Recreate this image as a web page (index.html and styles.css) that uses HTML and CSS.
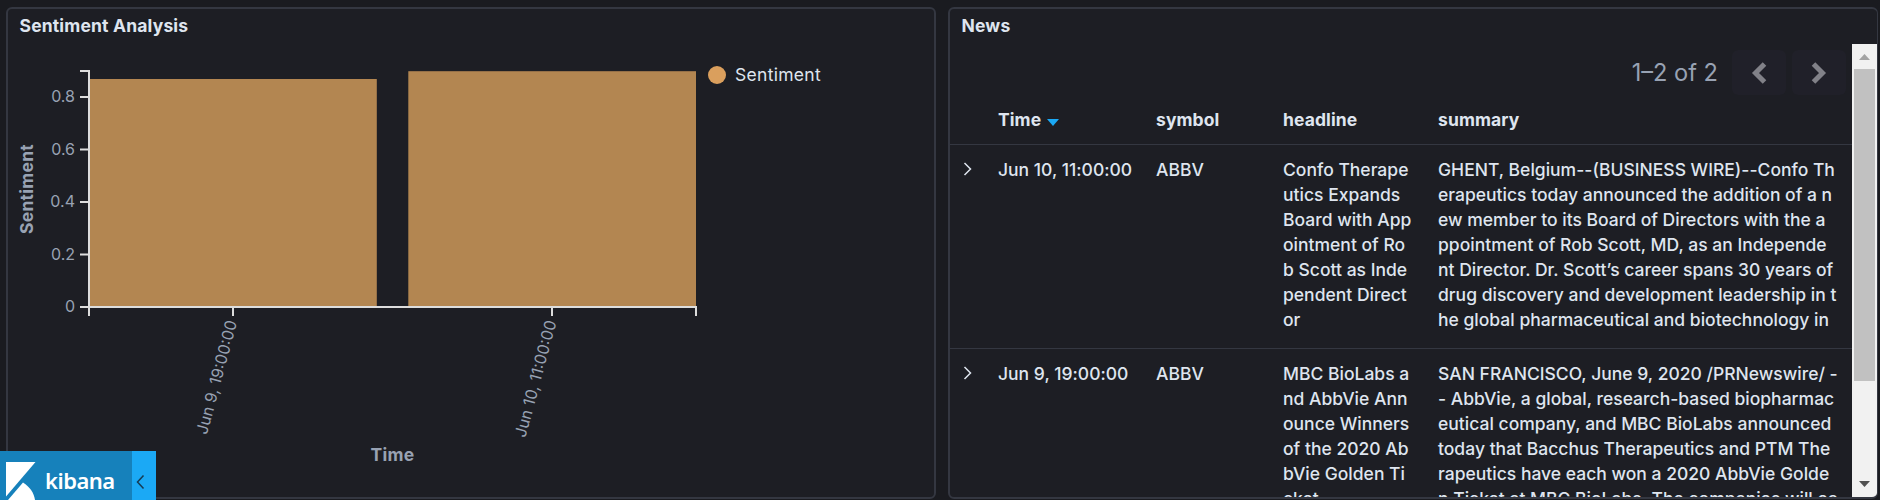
FILE: index.html
```html
<!DOCTYPE html>
<html lang="en">
<head>
<meta charset="utf-8">
<title>Dashboard</title>
<link rel="stylesheet" href="styles.css">
</head>
<body>
<main class="dashboard">
  <section class="panel">
    <h2 class="panel-title">Sentiment Analysis</h2>
    <svg class="chart" width="926" height="453" viewBox="8 44 926 453">
      <rect class="bar" x="89.5" y="79" width="287.3" height="228"/>
      <rect class="bar" x="408.3" y="71.200" width="287.7" height="236"/>
      <g class="axis">
        <path d="M80 71H89V307"/>
        <path d="M80 97H89M80 149.5H89M80 202H89M80 254.5H89"/>
        <path d="M80 307H696V316M89 307V316M233 307V316M552 307V316"/>
      </g>
      <g class="ticks">
        <text x="75" y="102">0.8</text>
        <text x="75" y="155">0.6</text>
        <text x="75" y="207">0.4</text>
        <text x="75" y="260">0.2</text>
        <text x="75" y="312">0</text>
        <text class="date" transform="translate(237.2 322) rotate(-75)">Jun 9, 19:00:00</text>
        <text class="date" transform="translate(556.5 322) rotate(-75)">Jun 10, 11:00:00</text>
      </g>
      <text class="axis-title" transform="translate(33 189) rotate(-90)">Sentiment</text>
      <text class="axis-title" x="392.5" y="461">Time</text>
      <circle class="dot" cx="717" cy="75" r="9"/>
      <text class="legend" x="735" y="81">Sentiment</text>
    </svg>
  </section>

  <section class="panel panel-news">
    <h2 class="panel-title">News</h2>
    <div class="scroll">
      <div class="content">
        <div class="pager">
          <span class="pager-text">1–2 of 2</span>
          <span class="pager-btn"><svg width="18" height="24" viewBox="0 0 18 24"><path d="M14.5 3 5.5 12l9 9"/></svg></span>
          <span class="pager-btn"><svg width="18" height="24" viewBox="0 0 18 24"><path d="M3.5 3l9 9-9 9"/></svg></span>
        </div>
        <div class="row head">
          <span></span>
          <span>Time<svg class="sort" width="12" height="7" viewBox="0 0 12 7"><path d="M0 0h12L6 7z"/></svg></span>
          <span>symbol</span><span>headline</span><span>summary</span>
        </div>
        <div class="row">
          <svg class="expand" width="10" height="16" viewBox="0 0 10 16"><path d="M1.5 2 7.5 8l-6 6"/></svg>
          <span>Jun 10, 11:00:00</span>
          <span>ABBV</span>
          <span>Confo Therape<br>utics Expands<br>Board with App<br>ointment of Ro<br>b Scott as Inde<br>pendent Direct<br>or</span>
          <span>GHENT, Belgium--(BUSINESS WIRE)--Confo Th<br>erapeutics today announced the addition of a n<br>ew member to its Board of Directors with the a<br>ppointment of Rob Scott, MD, as an Independe<br>nt Director. Dr. Scott’s career spans 30 years of<br>drug discovery and development leadership in t<br>he global pharmaceutical and biotechnology in</span>
        </div>
        <div class="row">
          <svg class="expand" width="10" height="16" viewBox="0 0 10 16"><path d="M1.5 2 7.5 8l-6 6"/></svg>
          <span>Jun 9, 19:00:00</span>
          <span>ABBV</span>
          <span>MBC BioLabs a<br>nd AbbVie Ann<br>ounce Winners<br>of the 2020 Ab<br>bVie Golden Ti<br>cket</span>
          <span>SAN FRANCISCO, June 9, 2020 /PRNewswire/ -<br>- AbbVie, a global, research-based biopharmac<br>eutical company, and MBC BioLabs announced<br>today that Bacchus Therapeutics and PTM The<br>rapeutics have each won a 2020 AbbVie Golde<br>n Ticket at MBC BioLabs. The companies will ea</span>
        </div>
      </div>
      <div class="scrollbar">
        <svg class="up" width="11" height="6" viewBox="0 0 11 6"><path d="M0 6 5.5 0 11 6z"/></svg>
        <div class="thumb"></div>
        <svg class="down" width="11" height="6" viewBox="0 0 11 6"><path d="M0 0h11L5.500 6z"/></svg>
      </div>
    </div>
  </section>
</main>

<div class="brand">
  <div class="brand-main">
    <svg class="brand-logo" width="30" height="38" viewBox="0 0 30 38"><path d="M0 0H29.500L0 34.500z"/><path d="M17 20.500C24 25 28 31 29 38H2z"/></svg>
    <span class="brand-name">kibana</span>
  </div>
  <div class="brand-toggle"><svg width="9" height="16" viewBox="0 0 9 16"><path d="M7.500 1.500 1.500 8l6 6.500"/></svg></div>
</div>
</body>
</html>
```
FILE: styles.css
```css
* { box-sizing: border-box; }
body {
  margin: 0;
  width: 1880px;
  height: 500px;
  overflow: hidden;
  background: #1a1b20;
  color: #dfe5ef;
  font: 17.5px/25px Inter, sans-serif;
}
svg { display: block; }
.dashboard {
  display: flex;
  gap: 12px;
  height: 499px;
  padding: 7px 2px 0 6px;
}
.panel {
  display: flex;
  flex-direction: column;
  width: 930px;
  height: 492px;
  border: 2px solid #343741;
  border-radius: 6px;
  background: #1d1e24;
  overflow: hidden;
}
.panel-news { border-right-width: 1px; }
.panel-title {
  flex: none;
  height: 35px;
  margin: 0;
  padding: 4px 11.5px 0;
  font-size: 17.5px;
  line-height: 25px;
  font-weight: 700;
  letter-spacing: 0.17px;
}
.chart { flex: none; }
.bar { fill: #b38651; }
.axis path { fill: none; stroke: #ddd; stroke-width: 2; }
.ticks text { fill: #98a2b3; font-size: 16px; text-anchor: end; }
.axis-title { fill: #98a2b3; font-size: 17.5px; font-weight: 700; text-anchor: middle; letter-spacing: 0.25px; }
.dot { fill: #da9f5d; }
.legend { fill: #dfe5ef; font-size: 17.5px; letter-spacing: 0.3px; }

.scroll { display: flex; height: 453px; overflow: hidden; }
.content { flex: none; width: 902px; overflow: hidden; }
.pager {
  display: flex;
  justify-content: flex-end;
  align-items: center;
  gap: 6px;
  height: 57px;
  padding: 0 6px 0 0;
}
.pager-text { margin-right: 8px; color: #98a2b3; font-size: 23.6px; }
.pager-btn {
  display: flex;
  align-items: center;
  justify-content: center;
  width: 54px;
  height: 45px;
  border-radius: 6px;
  background: #202029;
}
.pager-btn path { fill: none; stroke: #818188; stroke-width: 5; }
.row {
  display: grid;
  grid-template-columns: 48px 158px 127px 155px 414px;
  padding: 12px 0 16px;
  border-top: 1px solid #343741;
  white-space: nowrap;
  font-weight: 450;
  letter-spacing: 0.01px;
}
.head { height: 43px; padding: 6px 0 0; border-top: 0; font-weight: 700; letter-spacing: 0.1px; }
.sort { display: inline-block; margin-left: 6px; fill: #1ba9f5; }
.expand { margin: 4px 0 0 13px; }
.expand path { fill: none; stroke: #dfe5ef; stroke-width: 1.5; }
.scrollbar {
  display: flex;
  flex: none;
  flex-direction: column;
  align-items: center;
  width: 25px;
  background: #f1f1f1;
}
.up { flex: none; margin: 10px 0 9px; fill: #a3a3a3; }
.thumb { flex: none; width: 21px; height: 312px; background: #c1c1c1; }
.down { flex: none; margin-top: auto; margin-bottom: 10px; fill: #505050; }

.brand {
  position: absolute;
  left: 0;
  top: 451px;
  display: flex;
  width: 156px;
  height: 49px;
  overflow: hidden;
}
.brand-main { display: flex; gap: 9px; width: 132px; padding: 11px 0 0 6px; background: #1681bb; }
.brand-logo { flex: none; fill: #fff; }
.brand-name { padding-top: 6px; color: #fff; font: 600 22px/25px "Noto Sans", sans-serif; letter-spacing: -0.5px; }
.brand-toggle { width: 24px; padding: 23px 0 0 4px; background: #1ba9f5; }
.brand-toggle path { fill: none; stroke: #173b53; stroke-width: 1.5; }
```
